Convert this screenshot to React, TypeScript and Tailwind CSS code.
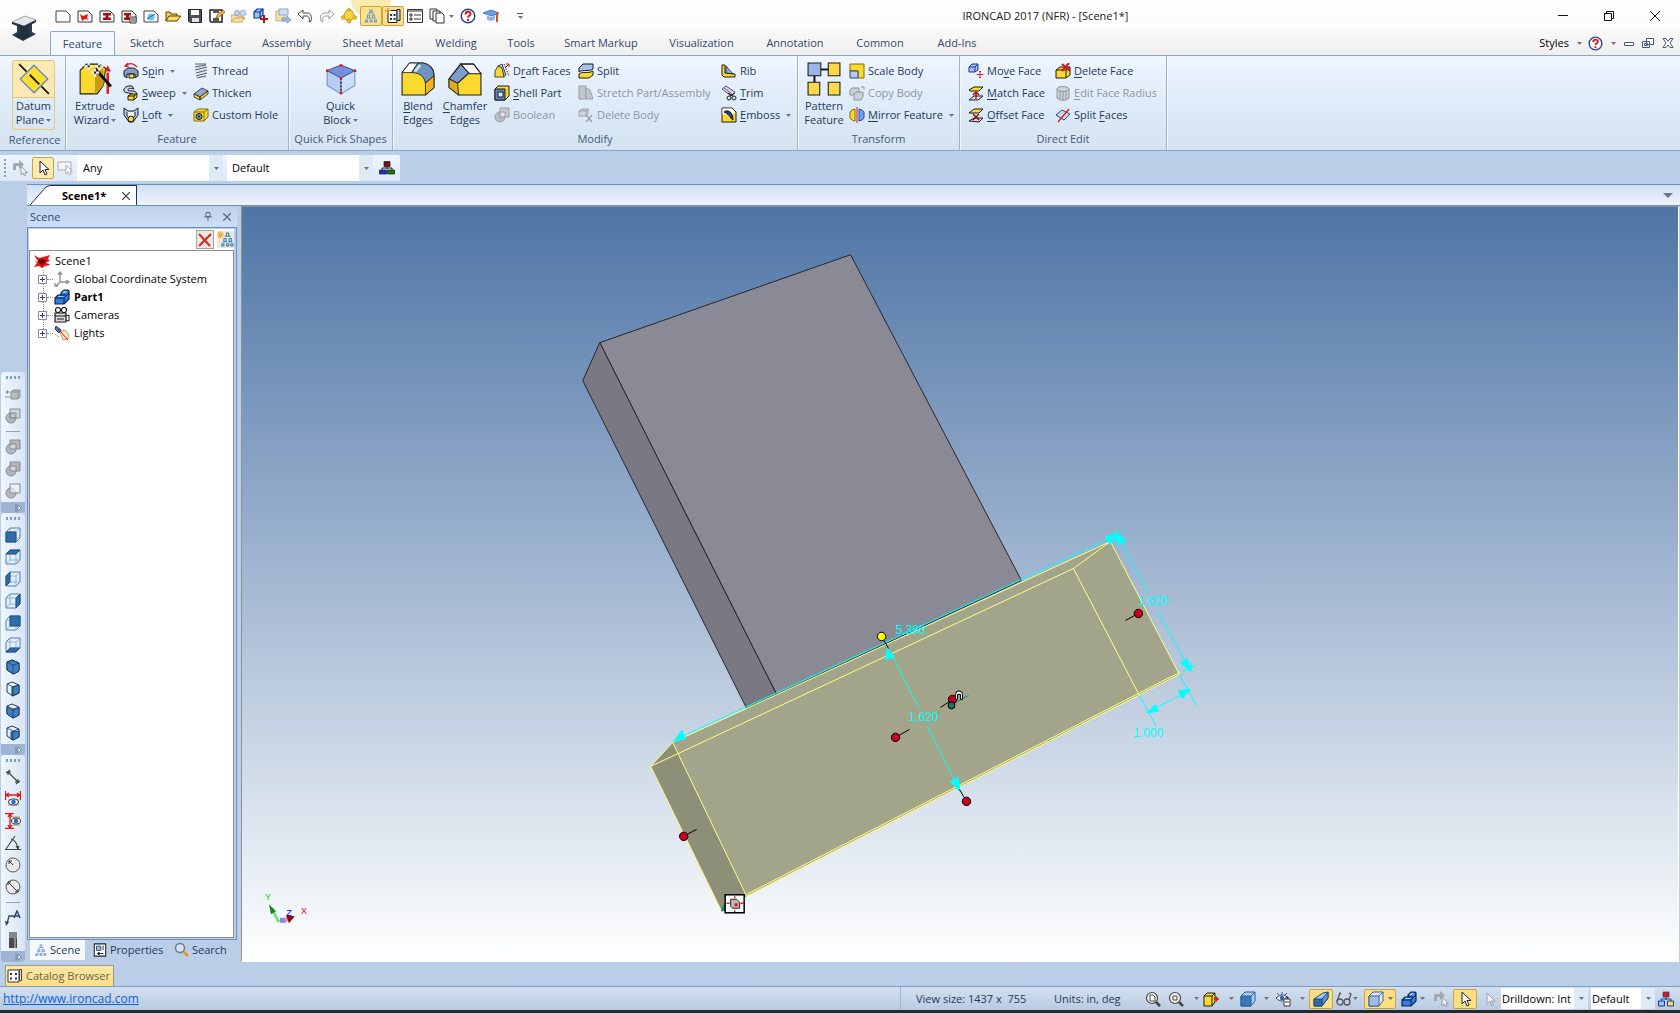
import { useState } from "react";
import type { ReactNode } from "react";

const N = "#1c1c1c"; // outline
const Y = "#fbd92f"; // yellow fill

// all small icons are drawn on a 16x16 grid
const icons: Record<string, ReactNode> = {
  page: <path d="M1 3h10l4 4v7H1z" fill="#fbfbfb" stroke="#444" />,
  pageRed: (
    <>
      <path d="M1 3h10l4 4v7H1z" fill="#fff" stroke="#333" />
      <path d="M3 6l3 2 5-2-1 4 2 2-4-1-3 2z" fill="#e11" />
    </>
  ),
  pageBeam: (
    <>
      <path d="M1 3h10l4 4v7H1z" fill="#fff" stroke="#333" />
      <path d="M4 5h8v2.500h-2.500v2H12V12H4V9.500h2.500v-2H4z" fill="#a80f14" />
    </>
  ),
  pageBeam2: (
    <>
      <path d="M1 3h10l4 4v7H1z" fill="#fff" stroke="#333" />
      <path d="M3 5h7v2.500H8v2h2V12H3V9.500h2v-2H3z" fill="#a80f14" />
      <path d="M9 9h6v6H9z" fill="#fff" stroke="#333" />
      <path d="M10 11h4M10 13h4" stroke="#333" />
    </>
  ),
  pageBlue: (
    <>
      <path d="M1 3h10l4 4v7H1z" fill="#fff" stroke="#444" />
      <circle cx="8" cy="9" r="3.500" fill="#6cc5e8" />
      <path d="M4 11l8-5" stroke="#17689c" />
    </>
  ),
  open: (
    <>
      <path d="M1 13V4h4l1 2h6v2" fill="#f5cf5d" stroke="#5a4300" />
      <path d="M1 13l3-5h12l-4 5z" fill="#fbdc6f" stroke="#5a4300" />
    </>
  ),
  save: (
    <>
      <path d="M1.500 1.500h13v13H3l-1.500-1.500z" fill="#4b525c" stroke="#222" />
      <path d="M4 2h8v5H4z" fill="#fff" />
      <path d="M5 10h7v4H5z" fill="#e6e6e6" />
    </>
  ),
  saveAs: (
    <>
      <path d="M1 2h12v12H2l-1-1z" fill="#fff" stroke="#222" strokeWidth="1.500" />
      <path d="M4 2h6v3H4zM4 10h6v4H4z" fill="#555" />
      <path d="M7 10l1-3 6-5 2 2-6 5z" fill="#f4b13c" stroke="#7a4a00" strokeWidth=".6" />
    </>
  ),
  folderGear: (
    <>
      <path d="M0 14V7h5l1 1h6v3M0 14l3-4h11l-3 4z" fill="#f9dfa0" stroke="#c9a55c" />
      <circle cx="6" cy="5" r="2.500" fill="#c9d6ef" stroke="#8da2cc" />
      <circle cx="12" cy="5" r="3" fill="#c9d6ef" stroke="#8da2cc" strokeDasharray="2 1" />
    </>
  ),
  cubePlus: (
    <>
      <path d="M1 4l3-3h6v6l-3 3H1z" fill="#9ec0f2" stroke="#123a8c" strokeWidth="1.200" />
      <path d="M1 4h6v6M7 4l3-3" fill="none" stroke="#123a8c" strokeWidth="1.200" />
      <path d="M11 7v8M7 11h8" stroke="#b4131a" strokeWidth="2" />
    </>
  ),
  boxExport: (
    <>
      <path d="M1 3h9v10H1z" fill="#f3e3a8" stroke="#b9b08c" />
      <path d="M4 1h9v6H4z" fill="#cfdcf3" stroke="#8fa6cf" />
      <path d="M7 10h5V8l4 4-4 3v-2H7z" fill="#9fb7dd" stroke="#6e8cc0" strokeWidth=".7" />
    </>
  ),
  undo: <path d="M1 6l5-4v3h4c4 0 5 3 4 8l-2 1c1-4 0-6-3-6H6v3z" fill="#fff" stroke="#444" />,
  redo: <path d="M15 6l-5-4v3H6C2 5 1 8 2 13l2 1C3 10 4 8 7 8h3v3z" fill="#fff" stroke="#999" />,
  bell: (
    <>
      <path d="M8 1l3 2 2 4 1 3-6 3-6-3 1-3 2-4z" fill="#fbd540" stroke="#a88300" strokeWidth=".8" />
      <circle cx="8" cy="13" r="2" fill="#f6c318" stroke="#a88300" strokeWidth=".7" />
      <circle cx="2" cy="9.500" r="1.700" fill="#f6c318" stroke="#a88300" strokeWidth=".6" />
      <circle cx="14" cy="9.500" r="1.700" fill="#f6c318" stroke="#a88300" strokeWidth=".6" />
      <circle cx="8" cy="1.500" r="1.200" fill="#f6c318" stroke="#a88300" strokeWidth=".6" />
    </>
  ),
  people: (
    <g fill="none" stroke="#6d9acb" strokeWidth="1.100">
      <path d="M7 4V2h2v2l1 1H6zM4.500 9V7h2v2l.5 1H4zM9.500 9V7h2v2l.5 1H9zM2.500 14v-2h2v2H1.500zM7 14v-2h2v2H6.500zM11.500 14v-2h2v2h-2.500z" />
    </g>
  ),
  peopleStar: (
    <>
      <g fill="none" stroke="#3f83b8" strokeWidth="1">
        <path d="M9 4V2h2v2l1 1H8zM6.500 9V7h2v2l.5 1H6zM11.500 9V7h2v2l.5 1h-3zM4.500 14v-2h2v2H4zM9 14v-2h2v2H8.500zM13 14v-2h2v2z" />
      </g>
      <path d="M3 0v7M0 3.500h6.500M1 1l4.500 5M5.500 1L1 6" stroke="#f0a52c" />
    </>
  ),
  catalogStar: (
    <>
      <path d="M3 2.500h9v12H3z" fill="#f6f6f6" stroke="#222" />
      <path d="M12 1.500h3v11h-3z" fill="#ccc" stroke="#222" />
      <path d="M5 6h2v2H5zM8.500 6h2v2h-2zM5 10h2v2H5zM8.500 10h2v2h-2z" fill="#333" />
      <path d="M3 0v5M0 2.500h6" stroke="#e38d18" strokeWidth="1.200" />
    </>
  ),
  catalog: (
    <>
      <path d="M1 2h11v12H1z" fill="#fff" stroke="#333" />
      <path d="M12.500 1.500h2v11h-2z" fill="#ddd" stroke="#444" />
      <path d="M3 5h2v2H3zM8 5h2v2H8zM3 9.500h2v2H3zM8 9.500h2v2H8z" fill="#333" />
    </>
  ),
  list: (
    <>
      <path d="M.5 1.500h15v13H.5z" fill="#fff" stroke="#333" />
      <path d="M0 3h16M7 7h7M7 11h7" stroke="#333" />
      <path d="M3 6h2v2H3zM3 10h2v2H3z" fill="#fff" stroke="#333" />
    </>
  ),
  copies: (
    <g fill="#fff" stroke="#333">
      <path d="M1 1h7v10H1z" />
      <path d="M4 3h7v10H4z" />
      <path d="M7 5h6l2 2v8H7z" />
    </g>
  ),
  help: (
    <>
      <circle cx="8" cy="8" r="6.800" fill="#fff" stroke="#2a4a86" strokeWidth="1.500" />
      <path d="M5.500 6.500C5.500 3 10.500 3 10.500 6c0 1.700-2.500 1.800-2.500 3.500M8 11v2" fill="none" stroke="#e01414" strokeWidth="2" />
    </>
  ),
  grad: (
    <>
      <path d="M0 5l8-3 8 3-7 3z" fill="#6d9de0" stroke="#4a7bc2" />
      <path d="M4 8v4l5 1 3-2V7L9 9z" fill="#8db4ec" />
      <path d="M14 5v9" stroke="#e24b1a" strokeWidth="2" />
    </>
  ),
  datum: (
    <>
      <path d="M8 1.500L14.500 8 8 14.500 1.500 8z" fill="#fbdf2a" stroke="#5d86cf" strokeWidth=".6" />
      <path d="M1 1l3.500 3.500M6 6l4.500 4.500M11.500 11.500L15 15" stroke={N} strokeWidth=".9" />
    </>
  ),
  extrude: (
    <>
      <path d="M1 4l3-3h6l3 2-1 8-3 4H1z" fill={Y} stroke={N} strokeWidth=".5" />
      <path d="M8 5l4-2v8l-4 4z" fill="#c99a12" />
      <path d="M14 5v10" stroke="#e01f1f" strokeWidth="1.200" />
      <path d="M14 1.500l1.500 3h-3z" fill="#e01f1f" />
      <path d="M8 3l7.500 8.500" stroke="#111" strokeWidth="1.400" />
      <path d="M5 0v4M3 2h4M10 0v4M8 2h4M8 3v4M6 5h4" stroke="#eee" strokeWidth="1" />
      <path d="M4.500 1.500h1v1h-1zM9.500 1.500h1v1h-1zM7.500 4.500h1v1h-1z" fill="#333" />
    </>
  ),
  spin: (
    <>
      <path d="M1 8l4-3h6l4 3v5l-3 2v-4H4v4l-3-2z" fill="#7f9fca" stroke={N} />
      <path d="M6 11h5v4H6z" fill={Y} stroke={N} />
      <path d="M3 3c3-3 7-3 11 1M5 0L2 3l4 1" fill="none" stroke="#e01414" strokeWidth="1.200" />
    </>
  ),
  sweep: (
    <>
      <path d="M9 1C4 0 0 3 1 6s8 1 9 4l4-1C13 4 5 7 5 5s3-2 6-1z" fill="#c3d3ea" stroke={N} />
      <path d="M5 11l3-2h6v3l-3 3H5z" fill={Y} stroke={N} />
      <path d="M5 11h6v4M11 11l3-2" fill="none" stroke={N} />
    </>
  ),
  loft: (
    <>
      <path d="M1 1l4 3h6l4-3v7l-5 7H6L1 8z" fill="#b8cbe9" stroke={N} />
      <path d="M4 5v4c0 2 8 2 8 0V5" fill="#eaf2fc" stroke={N} />
      <ellipse cx="8" cy="12" rx="3" ry="2.800" fill={Y} stroke={N} />
    </>
  ),
  thread: (
    <>
      <path d="M3 1h10v14H5z" fill="#dfe6f0" />
      <path d="M2 1h11M2 4l11-2M2 7l12-3M3 10l11-3M3 13l11-3M4 15l9-2" stroke="#5b6472" strokeWidth="1.200" />
    </>
  ),
  thicken: (
    <>
      <path d="M1 9l8-6 6 3-8 6z" fill="#8facd6" stroke={N} strokeWidth=".8" />
      <path d="M1 9l6 3v3L1 12zM7 12l8-6v3l-8 6z" fill={Y} stroke={N} strokeWidth=".8" />
    </>
  ),
  hole: (
    <>
      <path d="M1 5l4-3h10v8l-4 4H1z" fill={Y} stroke="#8a6a00" />
      <path d="M1 5h10v9M11 5l4-3" fill="none" stroke="#8a6a00" />
      <circle cx="6" cy="9.500" r="3" fill="#6f94c9" stroke={N} />
      <circle cx="6" cy="9.500" r="1" fill={N} />
    </>
  ),
  quick: (
    <>
      <path d="M1.500 4L8 7.500V15L1.500 11z" fill="#b7cdf4" stroke="#6b8fd0" strokeWidth=".5" />
      <path d="M14.500 4L8 7.500V15l6.500-4z" fill="#cfdffa" stroke="#6b8fd0" strokeWidth=".5" />
      <path d="M1.500 4L8 1.500 14.500 4 8 7.500z" fill="#7590d8" stroke="#4a62a8" strokeWidth=".5" />
      <path d="M8 7.500V15" stroke={N} strokeWidth=".6" strokeDasharray="1 .7" />
      <path d="M1 3.500h1.200v1.200H1zM7.400 1h1.200v1.200H7.400zM14 3.500h1.200v1.200H14zM7.400 7h1.200v1.200H7.400zM7.400 14h1.200v1.200H7.400z" fill="#f01212" />
    </>
  ),
  blend: (
    <>
      <path d="M.5 5L4 .5h6.500c3 .5 5 3 5 5V12L11.500 15.500H.5z" fill={Y} stroke={N} strokeWidth=".5" />
      <path d="M.5 5L4 .5h4L5 5z" fill="#fff" stroke={N} strokeWidth=".4" />
      <path d="M5 5L8 .5h2.500c3 .5 5 3 5 6L11.500 10C11 7 9 5 5 5z" fill="#6f93bf" stroke={N} strokeWidth=".4" />
      <path d="M6.500 4.500L9 1.500" stroke="#d5e3f3" strokeWidth="1.200" />
      <path d="M11.500 10l4-3.500V12l-4 3.500z" fill="#f5b41b" stroke={N} strokeWidth=".4" />
    </>
  ),
  chamfer: (
    <>
      <path d="M.5 8l5.500-7h6l3.500 4.500v10H5L.5 12z" fill={Y} stroke={N} strokeWidth=".5" />
      <path d="M.5 8L6 1l4 4-5.500 5z" fill="#7d9ecb" stroke={N} strokeWidth=".5" />
      <path d="M6 1h6l3.500 4.500H10z" fill="#fff" stroke={N} strokeWidth=".5" />
      <path d="M.5 8L4.500 10 5 15.500.5 12z" fill="#e0ab18" stroke={N} strokeWidth=".4" />
    </>
  ),
  draft: (
    <>
      <path d="M4 3l4-2 4 11-3 2z" fill="#a9c3ea" stroke={N} strokeWidth=".8" />
      <path d="M1 14V8l3-5 4 2 2 9z" fill={Y} stroke={N} strokeWidth=".8" />
      <path d="M10 1l5 12" stroke="#333" strokeDasharray="1.500 1" />
      <path d="M12 1h3v3M11 5l4-4" fill="none" stroke="#d11" />
    </>
  ),
  shell: (
    <>
      <path d="M1 4l3-3h11v10l-4 4H1z" fill={Y} stroke={N} />
      <path d="M1 4h10v11H1z" fill="#5d86bf" stroke={N} />
      <path d="M4 7h5v5H4z" fill="#dce9fb" stroke={N} />
    </>
  ),
  boolean: (
    <>
      <circle cx="6" cy="10" r="5" fill="#b9bdc4" stroke="#999da4" />
      <path d="M6 1h9v9H6z" fill="#c6cad0" stroke="#999da4" />
      <path d="M6 5h5v5H6z" fill="#dfe3e8" stroke="#999da4" />
    </>
  ),
  split: (
    <>
      <path d="M1 5l4-4h10v5c-4 3-10 0-14 3z" fill="#a9c4ec" stroke={N} />
      <path d="M1 11c4-3 9 0 14-3v4l-4 3H1z" fill={Y} stroke={N} />
    </>
  ),
  stretch: (
    <g fill="#c2c7cf" stroke="#9a9fa8">
      <path d="M1 1h7v13H1z" />
      <path d="M8 3l4 2 3 9H8z" />
    </g>
  ),
  deleteBody: (
    <>
      <path d="M1 4l3-2h6v5l-2 2H1zM1 4h7v5M8 4l2-2" fill="#d4d8de" stroke="#9a9fa8" />
      <path d="M8 8l6 7M14 8l-6 7" stroke="#9a9fa8" strokeWidth="1.500" />
    </>
  ),
  rib: (
    <>
      <path d="M1 2h3v8l10 1v3H3l-2-2z" fill={Y} stroke={N} />
      <path d="M5 3l7 8-7-1z" fill="#8fb0dd" stroke={N} strokeWidth=".8" />
    </>
  ),
  trim: (
    <>
      <path d="M1 4l4-3 9 6-4 4z" fill="#c4d4f2" stroke="#4561a8" />
      <path d="M3 3l8 6" stroke="#e04848" />
      <circle cx="8" cy="13" r="2" fill="none" stroke={N} />
      <circle cx="13" cy="13" r="2" fill="none" stroke={N} />
      <path d="M9 11l5-3M12 11L7 8" stroke={N} />
    </>
  ),
  emboss: (
    <>
      <path d="M1 1h10l4 4v10H1z" fill={Y} stroke={N} />
      <path d="M1.500 1.500h9l4 4-3 2h-10z" fill="#fff" />
      <path d="M3 5c4-3 9 0 9 8-3-1-2-5-9-8z" fill="#1f3f7a" stroke={N} />
    </>
  ),
  pattern: (
    <>
      <path d="M3.500 3.500h9M3.500 3.500v8" stroke={N} />
      <path d="M.5.5h6v6h-6z" fill="#9bb4ea" stroke={N} strokeWidth=".5" />
      <path d="M10 .5h5.500v6H10zM.5 9.500H6v6H.5zM10 9.500h5.500v6H10z" fill="#fcd94a" stroke={N} strokeWidth=".5" />
    </>
  ),
  scale: (
    <>
      <path d="M1 1h14v14H9V8H1z" fill={Y} stroke="#8a6a00" />
      <path d="M1 8h8v7H1z" fill="#b6c9f3" stroke="#33427a" />
    </>
  ),
  copyBody: (
    <g fill="#ccd1d8" stroke="#8f959e">
      <path d="M1 5l2-2h7v5l-2 2H1z" />
      <path d="M5 9l2-2h7v5l-2 3H5z" />
      <path d="M12 2h3v3" fill="none" />
    </g>
  ),
  mirror: (
    <>
      <path d="M1 5l2-2 3-1v12l-3-1-2-2z" fill={Y} stroke="#8a6a00" />
      <path d="M15 5l-2-2-3-1v12l3-1 2-2z" fill="#6fa0ea" stroke="#2d4f96" />
      <path d="M8 0v16" stroke="#e01414" />
    </>
  ),
  moveFace: (
    <>
      <path d="M1 4l3-3h6v6L7 9H1z" fill="#a5c2f3" stroke="#123a8c" />
      <path d="M1 4h6v5M7 4l3-3" fill="none" stroke="#123a8c" />
      <path d="M12 8v7M8.500 11.500h7M11 9l1-1 1 1M11 14l1 1 1-1" fill="none" stroke="#c8323a" />
    </>
  ),
  matchFace: (
    <>
      <path d="M1 5l5-3h9l-4 4H2z" fill={Y} stroke={N} />
      <path d="M1 15l5-4h9l-5 4z" fill="#e8e8e8" stroke={N} />
      <path d="M8 14V8M5 10l3-3 3 3" fill="none" stroke="#b4131a" strokeWidth="1.500" />
    </>
  ),
  offsetFace: (
    <>
      <path d="M1 6l5-4h9l-4 4z" fill={Y} stroke={N} />
      <path d="M1 14l5-3h9l-4 4z" fill="#ddd" stroke={N} />
      <path d="M5 7l6 6M11 7l-6 6" stroke="#8d1016" strokeWidth="1.500" />
    </>
  ),
  deleteFace: (
    <>
      <path d="M1 7l4-3h10v8l-4 3H1z" fill={Y} stroke={N} />
      <path d="M1 7h10v8M11 7l4-3" fill="none" stroke={N} />
      <path d="M7 1l8 7M14 0L7 8" stroke="#d1161c" strokeWidth="2" />
    </>
  ),
  editRadius: (
    <g fill="#cdd2d9" stroke="#8f959e">
      <path d="M2 4v9c2 3 10 3 12 0V4" />
      <ellipse cx="8" cy="4" rx="6" ry="2.500" />
      <path d="M5 6v8M8 7v8M11 6v8" fill="none" />
    </g>
  ),
  splitFaces: (
    <>
      <path d="M1 8l6-5 8 4-6 6z" fill="#c9d7f1" stroke="#33427a" />
      <path d="M3 15L14 2" stroke="#e01414" strokeWidth="1.300" />
    </>
  ),
  cursorBack: (
    <>
      <path d="M1 10V4l2-1h4V0l5 4.500L7 9V6H4v4z" fill="#a3a7ad" />
      <path d="M9 6v9l2-2 1.500 3 1.500-1-1-2.500h2.500z" fill="#e9edf2" stroke="#8b9097" strokeWidth=".8" />
    </>
  ),
  cursor: <path d="M5 1v12l3-3 2 5 2-1-2-4.500h4z" fill="#fff" stroke="#222" />,
  cursorBox: (
    <>
      <path d="M1 2h13v8H1z" fill="#f1f4f9" stroke="#a6abb3" />
      <path d="M9 5v9l2-2 1.500 3 1.500-1-1-2.500h2.500z" fill="#fff" stroke="#999da4" strokeWidth=".8" />
    </>
  ),
  cursorGray: <path d="M6 2v11l3-3 2 5 1.500-1-2-4h3.500z" fill="#f4f6fa" stroke="#9b9fa5" />,
  orgTree: (
    <>
      <path d="M8 5v4M3 11V8h10v3" fill="none" stroke={N} />
      <path d="M5 1.500h6v5H5z" fill="#7d0d12" stroke={N} strokeWidth=".7" />
      <path d="M.5 10h7v4h-7z" fill="#1b2fd0" stroke={N} strokeWidth=".7" />
      <path d="M8.500 10h7v4h-7z" fill="#0d7a1c" stroke={N} strokeWidth=".7" />
    </>
  ),
  orgTree2: (
    <>
      <path d="M8 5v4M3 11V8h10v3" fill="none" stroke="#1c3f9c" />
      <path d="M5 1h6v5H5z" fill="#e01414" stroke="#1c3f9c" strokeWidth=".7" />
      <path d="M.5 10h6v5h-6z" fill="#9cc4f2" stroke="#1c3f9c" />
      <path d="M9.500 10h6v5h-6z" fill="#f6e04a" stroke="#1c3f9c" />
    </>
  ),
  scene: (
    <>
      <path d="M0 2l5 3 4-1 7-2-2 4 2 2-3 1 3 3-5 1-3 2-3-2-5 1 3-4-2-2 2-1z" fill="#e5141a" />
      <path d="M4 7l4-1 4 1-1 3-3 2-3-2z" fill="#6d070b" />
      <path d="M0 6l4 1-1 2zM16 9l-4 0 2 2z" fill="#fff" />
    </>
  ),
  axes: <path d="M6 2v9h8M6 11l-4 4M4 4l2-3 2 3M12 9l3 2-3 2M1 12v3h3" fill="none" stroke="#8a9098" strokeWidth="1.300" />,
  part: (
    <>
      <path d="M1 9l3-3h3V4l3-3h4l1 1v8l-5 5H1z" fill="#2f7fe0" stroke="#0c1f4a" strokeWidth="1.200" />
      <path d="M1 9h9v6M10 9l5-5M7 6h5" fill="none" stroke="#0c1f4a" />
      <path d="M3 8l2-1h5l-1 1zM8 4l2-2h3l-2 2z" fill="#a7d1fb" />
    </>
  ),
  camera: (
    <>
      <circle cx="4" cy="3" r="2.500" fill="#fff" stroke={N} strokeWidth="1.200" />
      <circle cx="10" cy="3" r="2.500" fill="#fff" stroke={N} strokeWidth="1.200" />
      <path d="M1 6h11v9H1z" fill="#d8d8de" stroke={N} strokeWidth="1.200" />
      <path d="M1 9h11M3 12h7M12 9l3-1v6l-3-1" fill="none" stroke={N} />
    </>
  ),
  light: (
    <>
      <path d="M2 1l5 4-2 3-4-4z" fill="#4b79c4" stroke="#1f3a70" />
      <path d="M6 7l5-2 4 5-1 4-5 1z" fill="#f2e6c0" stroke="#b7a671" />
      <path d="M4 4l10 11" stroke="#d11" />
      <path d="M1 9l4 3" stroke="#777" strokeDasharray="1 1" />
    </>
  ),
  props: (
    <>
      <path d="M1.500 1h13v14h-13z" fill="#fff" stroke="#222" strokeWidth="1.200" />
      <path d="M4 3.500h5v5H4z" fill="#9fb8dd" stroke="#2c4e86" />
      <path d="M11.500 3v5M5 12h7M5 12l2-1.500v3z" stroke="#222" />
    </>
  ),
  search: (
    <>
      <circle cx="6" cy="6" r="4.500" fill="#cfe4f8" stroke="#777" strokeWidth="1.500" />
      <path d="M10 10l4 4" stroke="#e19a1e" strokeWidth="3" />
    </>
  ),
  magPage: (
    <>
      <circle cx="7" cy="7" r="5.500" fill="#f4f4f4" stroke="#444" strokeWidth="1.200" />
      <path d="M5 4h3l2 2v4H5z" fill="#fff" stroke="#444" />
      <path d="M11 11l4 4" stroke="#444" strokeWidth="2.500" />
    </>
  ),
  magBox: (
    <>
      <circle cx="7" cy="7" r="5.500" fill="#f4f4f4" stroke="#444" strokeWidth="1.200" />
      <path d="M5 5h4v4H5z" fill="none" stroke="#444" />
      <path d="M11 11l4 4" stroke="#444" strokeWidth="2.500" />
    </>
  ),
  cubeYellow: (
    <>
      <path d="M1 5l3-3h8v9l-3 4H1z" fill={Y} stroke={N} />
      <path d="M1 5h8v10M9 5l3-3" fill="none" stroke={N} />
      <path d="M11 8h5M13.500 5.500v5" stroke="#e01414" strokeWidth="1.500" />
    </>
  ),
  cubeBlue: (
    <>
      <path d="M1 5l4-4h10v9l-4 5H1z" fill="#a9cdf0" stroke="#2d5f9a" />
      <path d="M1 5h10v10H1z" fill="#3b78b8" stroke="#2d5f9a" />
      <path d="M11 5l4-4" stroke="#2d5f9a" />
    </>
  ),
  eyeLock: (
    <>
      <path d="M0 7c4-4 9-4 12 0-3 4-8 4-12 0z" fill="#fff" stroke="#444" />
      <circle cx="6" cy="7" r="2.200" fill="#2469b8" />
      <path d="M6 1v3M1 2l2 2M11 2L9 4" stroke="#2469b8" />
      <path d="M8 8h6v7H8z" fill="#fff" stroke="#333" />
      <path d="M10 8V6h2v2M9 11h4" fill="none" stroke="#333" />
    </>
  ),
  persp: (
    <>
      <path d="M1 8L10 2l5-1v6l-6 8H1z" fill="#a9cdf0" stroke="#214a7c" />
      <path d="M9 8l6-7v6l-6 8z" fill="#5f95cc" stroke="#214a7c" />
      <path d="M1 8h8v7H1z" fill="#2f6aa8" stroke="#214a7c" />
    </>
  ),
  glasses: (
    <g fill="none" stroke="#555" strokeWidth="1.300">
      <circle cx="4" cy="11" r="3" />
      <circle cx="11" cy="11" r="3" />
      <path d="M1 10L4 2l1 1M13 9l2-6-2-1" />
    </g>
  ),
  cubeShade: (
    <>
      <path d="M1 5l4-4h10v9l-4 5H1z" fill="#dbe9fa" stroke="#3f5f94" />
      <path d="M1 5h10v10H1z" fill="#9dbdec" stroke="#3f5f94" />
      <path d="M11 5l4-4" stroke="#3f5f94" />
    </>
  ),
  extents: (
    <g fill="#b9bdc4" stroke="#8a8f98">
      <path d="M6 6l2-2h7v7l-2 2H6z" />
      <path d="M6 6h7v7M13 6l2-2" fill="none" />
      <path d="M0 6h5M2.500 4v4M0 11h5" />
    </g>
  ),
  boolA: (
    <g stroke="#868c96">
      <circle cx="6" cy="10" r="5" fill="#b3b8c0" />
      <path d="M5 1h10v9H5z" fill="#c6cad0" fillOpacity=".6" />
      <path d="M5 5h6v5H5z" fill="none" />
    </g>
  ),
  boolB: (
    <g stroke="#868c96">
      <path d="M5 1h10v9H5z" fill="#b3b8c0" />
      <circle cx="6" cy="10" r="5" fill="#b3b8c0" />
      <path d="M5 5h6v5H5z" fill="#d3d7dc" />
    </g>
  ),
  boolC: (
    <g stroke="#868c96">
      <circle cx="6" cy="10" r="5" fill="#b3b8c0" />
      <path d="M5 1h10v9H5z" fill="#eef2f8" fillOpacity=".7" />
    </g>
  ),
  dimLine: <path d="M1 4l4-3M11 15l4-3M3 3l10 10M3 6V3h3M10 13h3v-3" fill="none" stroke="#444" strokeWidth="1.100" />,
  dimH: (
    <>
      <path d="M3 8h11v7H3z" fill="#c9bda4" />
      <ellipse cx="8.500" cy="11" rx="5" ry="3" fill="#fff" stroke="#333" />
      <circle cx="8.500" cy="11" r="2.300" fill="#1f6fd0" />
      <path d="M.5 0v9M15.500 0v9M1 4h14M4 2L1 4l3 2M12 2l3 2-3 2" fill="none" stroke="#e01414" strokeWidth="1.300" />
    </>
  ),
  dimV: (
    <>
      <path d="M8 3h7v10H8z" fill="#c9bda4" />
      <ellipse cx="11" cy="8" rx="4.500" ry="3" fill="#fff" stroke="#333" />
      <circle cx="11" cy="8" r="2.300" fill="#1f6fd0" />
      <path d="M0 .5h9M0 15.500h9M5 1v14M3 4l2-3 2 3M3 12l2 3 2-3" fill="none" stroke="#e01414" strokeWidth="1.300" />
    </>
  ),
  angle: <path d="M0 14.500h16M1 14L10 1M6 4c4 1 6 5 7 9M11 11l2 3 1-3" fill="none" stroke="#444" strokeWidth="1.100" />,
  radius: (
    <>
      <circle cx="8" cy="8" r="7" fill="#e9eaec" stroke="#555" />
      <path d="M8 8L4 4M4 7V4h3" fill="none" stroke="#333" />
    </>
  ),
  diameter: (
    <>
      <circle cx="8" cy="8" r="7" fill="#e9eaec" stroke="#555" />
      <path d="M3 3l10 10M3 6V3h3M10 13h3v-3" fill="none" stroke="#333" />
    </>
  ),
  leader: (
    <>
      <path d="M2 14L4 6h5" fill="none" stroke="#27466f" strokeWidth="1.300" />
      <path d="M0 11l4 1-3 4z" fill="#27466f" />
      <path d="M9 8l3-7 3 7M10 6h4" fill="none" stroke="#27466f" strokeWidth="1.500" />
    </>
  ),
  bolt: (
    <>
      <path d="M4 6h8v10H4z" fill="#4a4a4a" />
      <path d="M9 6h2v10H9z" fill="#8b8b8b" />
      <path d="M4 1h8M4 3h8M4 5h8" stroke="#222" />
    </>
  ),
};

// wire cubes of the view toolbar, one face filled
const faces: Record<string, string> = {
  front: "M1 5h10v10H1z",
  top: "M1 5l4-4h10l-4 4z",
  left: "M1 5l4-4v10l-4 4z",
  right: "M11 5l4-4v10l-4 4z",
  back: "M5 1h10v10H5z",
  bottom: "M1 15l4-4h10l-4 4z",
};

const isoFaces: Record<string, string> = {
  iso1: "M2 3l5-2 7 3v8l-5 3-7-4z",
  iso2: "M7 6l7-2v8l-7 3z",
  iso3: "M2 4l6 3 6-2v7l-6 3-6-4z",
  iso4: "M6 7l8-1v6l-6 3-2-1z",
};

function Icon({ name, className = "size-4" }: { name: string; className?: string }) {
  let body = icons[name];
  if (faces[name]) {
    body = (
      <>
        <path d="M1 5l4-4h10v10l-4 4H1z" fill="#e4effb" stroke="#4d7fb5" />
        <path d="M1 5h10v10M11 5l4-4M5 1v10h10M5 11l-4 4" fill="none" stroke="#7fa4cc" strokeWidth=".8" />
        <path d={faces[name]} fill="#2f6cab" stroke="#24527f" />
      </>
    );
  } else if (isoFaces[name]) {
    body = (
      <>
        <path d="M2 3l5-2 7 3v8l-6 3-6-4z" fill="#e4effb" stroke="#1f3f63" />
        <path d={isoFaces[name]} fill="#3f7fc4" stroke="#1f3f63" />
        <path d="M8 15V6L2 3M8 6l6-2" fill="none" stroke="#1f3f63" strokeWidth=".8" />
      </>
    );
  }
  return (
    <svg viewBox="0 0 16 16" className={`shrink-0 ${className}`} aria-hidden="true">
      {body}
    </svg>
  );
}

function Caret({ className = "" }: { className?: string }) {
  return (
    <svg viewBox="0 0 5 3" className={`w-[5px] h-[3px] shrink-0 ${className}`} aria-hidden="true">
      <path d="M0 0h5L2.500 3z" fill="#6b7585" />
    </svg>
  );
}

const tabs = [
  { label: "Feature", width: "w-[65px]" },
  { label: "Sketch", width: "w-16" },
  { label: "Surface", width: "w-[67px]" },
  { label: "Assembly", width: "w-[81px]" },
  { label: "Sheet Metal", width: "w-[92px]" },
  { label: "Welding", width: "w-[74px]" },
  { label: "Tools", width: "w-14" },
  { label: "Smart Markup", width: "w-[104px]" },
  { label: "Visualization", width: "w-[97px]" },
  { label: "Annotation", width: "w-[90px]" },
  { label: "Common", width: "w-20" },
  { label: "Add-Ins", width: "w-[74px]" },
];

const quickAccess = [
  "page", "pageRed", "pageBeam", "pageBeam2", "pageBlue", "open", "save", "saveAs",
  "folderGear", "cubePlus", "boxExport", "undo", "redo", "bell", "people", "catalogStar", "list",
];

// "_" marks the letter that is underlined
function Label({ text }: { text: string }) {
  const i = text.indexOf("_");
  if (i < 0) return <span>{text}</span>;
  return (
    <span>
      {text.slice(0, i)}
      <u className="underline-offset-2">{text[i + 1]}</u>
      {text.slice(i + 2)}
    </span>
  );
}

function Cmd({ icon, text, menu, off }: { icon: string; text: string; menu?: boolean; off?: boolean }) {
  return (
    <button
      disabled={off}
      className={`flex items-center h-[22px] gap-[3px] whitespace-nowrap ${off ? "text-[#8d95a3]" : "text-[#1e395b]"}`}
    >
      <Icon name={icon} />
      <Label text={text} />
      {menu && <Caret className="ml-[3px]" />}
    </button>
  );
}

function BigCmd({ icon, lines, menu, width }: { icon: string; lines: string[]; menu?: boolean; width: string }) {
  return (
    <button className={`flex flex-col items-center justify-start pt-[2px] text-[#1e395b] whitespace-nowrap leading-[14px] ${width}`}>
      <Icon name={icon} className="size-[34px]" />
      <span className="mt-[3px]">
        <Label text={lines[0]} />
      </span>
      <span className="flex items-center gap-[2px]">
        {lines[1]}
        {menu && <Caret />}
      </span>
    </button>
  );
}

function Group({ title, width, children }: { title: string; width: string; children: ReactNode }) {
  return (
    <section className={`flex flex-col shrink-0 border-r border-[#9db2cd] shadow-[1px_0_0_#f5f9fe] ${width}`}>
      <div className="flex flex-1 pt-1">{children}</div>
      <h2 className="h-[21px] text-center text-[#43587a] leading-5 whitespace-nowrap">{title}</h2>
    </section>
  );
}

function Handle() {
  return (
    <div className="flex h-[11px] w-full items-center justify-end bg-[#9db4d5] rounded-b-sm pr-1">
      <svg viewBox="0 0 6 8" className="w-[6px] h-2">
        <path d="M1 0v8M3 1l3 3-3 3z" fill="#fff" stroke="#5a6c88" strokeWidth=".7" />
      </svg>
    </div>
  );
}

function SideBar({ label, items }: { label: string; items: string[] }) {
  return (
    <div>
      <div role="toolbar" aria-label={label} className="flex flex-col items-center rounded-t bg-linear-to-r from-[#f0f6fd] to-[#d8e5f5]">
        <div className="my-1 h-[3px] w-[15px] bg-[repeating-linear-gradient(90deg,#7f9fca_0_2px,transparent_2px_4px)]" />
        {items.map((item, i) =>
          item === "-" ? (
            <hr key={i} className="my-1 w-[14px] border-[#8ea5c4]" />
          ) : (
            <button key={i} aria-label={item} className="flex h-[22px] items-center">
              <Icon name={item} />
            </button>
          )
        )}
      </div>
      <Handle />
    </div>
  );
}

function Drop({ label, options, className }: { label: string; options: string[]; className: string }) {
  return (
    <div className={`flex items-center bg-white ${className}`}>
      <select aria-label={label} className="h-full min-w-0 flex-1 appearance-none bg-transparent text-black outline-none">
        {options.map((o) => (
          <option key={o}>{o}</option>
        ))}
      </select>
      <span className="flex h-full w-[14px] items-center justify-center bg-[#dfeaf7]">
        <Caret />
      </span>
    </div>
  );
}

const tree = [
  { icon: "axes", label: "Global Coordinate System" },
  { icon: "part", label: "Part1", bold: true },
  { icon: "camera", label: "Cameras" },
  { icon: "light", label: "Lights" },
];

function Pin({ x, y, dx, dy, color = "#c8001e" }: { x: number; y: number; dx: number; dy: number; color?: string }) {
  return (
    <g stroke="#000">
      <path d={`M${x} ${y}l${dx} ${dy}`} />
      <circle cx={x} cy={y} r="4.200" fill={color} />
    </g>
  );
}

function Model() {
  return (
    <svg viewBox="242 208 1437 755" preserveAspectRatio="xMidYMid slice" className="absolute inset-0 size-full">
      <g stroke="#26262c" strokeWidth="1" strokeLinejoin="round">
        <path d="M600 344L851 256 1022 582 777 696z" fill="#8a8a97" />
        <path d="M600 344L583 382 747 710 777 696z" fill="#7a7983" />
      </g>

      <path d="M651 768L673 744 1111 543 1180 676 747 898 722 913z" fill="#a3a58b" />
      <path d="M651 768L673 744 747 898 722 913z" fill="#8e8f79" />
      <g fill="none" stroke="#ffff82" strokeWidth="1">
        <path d="M651 768L673 744 1111 543 1180 676 747 898M673 744L747 898M651 768L722 913" />
        <path d="M651 768L1074 570 1111 543M1074 570L1140 697" />
        <path d="M747 896L1180 674" />
      </g>
      <path d="M721 913l5-11v11z" fill="#108a82" />

      <g stroke="#00ffff" strokeWidth="1" fill="#00ffff">
        <path d="M674 742L1117 537" fill="none" />
        <path d="M674 743l8-11 4 8zM1119 535l-13 3 5 8z" />
        <path d="M1117 535L1149 594M1158 612L1190 671" fill="none" />
        <path d="M1116 534l3 13 8-5zM1191 673l-10-9 7-4z" />
        <path d="M1111 543l15-12M1117 531v8M1183 673l14-6M1180 676l17 31M1140 697l17 31M1192 664v9" fill="none" />
        <path d="M1147 714L1191 692" fill="none" />
        <path d="M1148 714l8-8 3 7zM1191 691l-12 1 4 8z" />
        <path d="M889 650L919 709M928 728L959 790" fill="none" />
        <path d="M888 650l-2 11 9-3zM960 793l-9-10 8-4z" />
      </g>
      <g fill="#00ffff" fontSize="12" textAnchor="middle" fontFamily="Liberation Sans, Arial, sans-serif">
        <text x="911" y="636">5.380</text>
        <text x="924" y="723">1.620</text>
        <text x="1154" y="607">1.620</text>
        <text x="1149" y="739">1.000</text>
      </g>

      <Pin x={882} y={638} dx={7} dy={12} color="#ffff00" />
      <Pin x={1139} y={615} dx={-13} dy={7} />
      <Pin x={896} y={739} dx={14} dy={-8} />
      <Pin x={967} y={803} dx={-7} dy={-12} />
      <Pin x={684} y={838} dx={13} dy={-7} />
      <path d="M955 705L969 697" stroke="#108a82" />
      <Pin x={953} y={701} dx={-12} dy={8} />
      <circle cx="952" cy="707" r="3.500" fill="#10736c" stroke="#000" />
      <path d="M956 701v-5a3.500 3.500 0 017 0v5h-2v-5h-3v5z" fill="#fff" stroke="#000" />

      <rect x="725.500" y="896.500" width="19" height="18" fill="#fff" stroke="#000" strokeWidth="1.500" />
      <path d="M731 901h6l3 3v6h-7l-2-2z" fill="#bbb" stroke="#222" />
      <path d="M735 898v2M735 912v2M727 905h3M741 905h3" stroke="#e01414" strokeWidth="1.500" />
      <rect x="735" y="905" width="3" height="3" fill="#e01414" />

      <path d="M279 924L272 911" stroke="#7be08a" strokeWidth="3" />
      <path d="M269 906l7 7-5 3z" fill="#0c8a1c" />
      <path d="M280 922h6" stroke="#8484f4" strokeWidth="5" />
      <path d="M285 922l4-2" stroke="#f28b8b" strokeWidth="4" />
      <path d="M286 917l9 1-6 7z" fill="#8d0c12" />
      <g fontSize="9" textAnchor="middle" fontFamily="Liberation Sans, Arial, sans-serif">
        <text x="268" y="902" fill="#00d820">Y</text>
        <text x="289" y="918" fill="#0000e0">Z</text>
        <text x="304" y="916" fill="#e00018">X</text>
      </g>
    </svg>
  );
}

export default function App() {
  const [tab, setTab] = useState("Feature");
  const [query, setQuery] = useState("");

  return (
    <div className="flex min-h-screen flex-col bg-[#bbcee8] font-['Open_Sans','Noto_Sans',sans-serif] text-[11px] leading-4 text-black">
      {/* Title bar + ribbon tabs */}
      <header className="relative flex h-[55px] bg-linear-to-b from-white via-[#fbfbfb] to-[#eeeeef]">
        {/* click highlight */}
        <div className="pointer-events-none absolute top-0 left-[351px] h-4 w-10 rounded-b-full bg-[#f7dc7c] opacity-60" />
        <button aria-label="Application menu" className="flex w-[50px] items-center pl-[11px]">
          <svg viewBox="0 0 26 28" className="w-[26px] h-7">
            <path d="M1 8L14 2l11 4-4 3v9l4 2-13 7-11-6 5-3v-8z" fill="#2f3d4b" />
            <path d="M1 8l13-6 11 4-12 6z" fill="#e3e8ec" stroke="#8a949e" strokeWidth=".6" />
            <path d="M1 8l12 4 12-6v2l-7 4v7l4 2-10 5-8-4 5-3v-6L1 10z" fill="#223140" />
          </svg>
        </button>
        <div className="relative flex flex-1 flex-col justify-between">
          <div className="flex h-8 items-center pl-[2px]">
            {quickAccess.map((item) => (
              <button
                key={item}
                aria-label={item}
                className={`flex h-5 w-[22px] items-center justify-center ${
                  item === "people" || item === "catalogStar" ? "rounded-xs border border-[#c9a43c] bg-[#fbe08b]" : ""
                }`}
              >
                <Icon name={item} />
              </button>
            ))}
            <button aria-label="copies" className="flex w-8 items-center gap-1 pl-[3px]">
              <Icon name="copies" />
              <Caret />
            </button>
            <button aria-label="help" className="flex w-[18px] justify-end">
              <Icon name="help" />
            </button>
            <button aria-label="learn" className="flex w-[30px] justify-center">
              <Icon name="grad" />
            </button>
            <button aria-label="Customize" className="ml-[11px] flex flex-col items-center gap-[2px]">
              <span className="h-px w-[6px] bg-[#555]" />
              <Caret />
            </button>
            <h1 className="flex-1 pl-20 text-center text-[#222]">IRONCAD 2017 (NFR) - [Scene1*]</h1>
            <div className="flex w-[192px] items-center justify-end gap-9 pr-5">
              <button aria-label="Minimize">
                <svg viewBox="0 0 10 10" className="size-[10px]"><path d="M0 4.500h10" stroke="#111" /></svg>
              </button>
              <button aria-label="Restore">
                <svg viewBox="0 0 10 10" className="size-[10px]"><path d="M.5 2.500h7v7h-7zM2.500 2.500v-2h7v7h-2" fill="none" stroke="#111" /></svg>
              </button>
              <button aria-label="Close">
                <svg viewBox="0 0 10 10" className="size-[10px]"><path d="M0 0l10 10M10 0L0 10" stroke="#111" /></svg>
              </button>
            </div>
          </div>
          <div className="flex h-[23px] items-end">
            <nav className="flex">
              {tabs.map((t) => (
                <button
                  key={t.label}
                  onClick={() => setTab(t.label)}
                  className={`h-6 shrink-0 text-[#31486b] whitespace-nowrap ${t.width} ${
                    tab === t.label ? "rounded-t-xs border border-b-0 border-[#8ea9cc] bg-[#f3f8fe]" : ""
                  }`}
                >
                  {t.label}
                </button>
              ))}
            </nav>
            <div className="ml-auto flex h-6 items-center pr-[6px]">
              <button className="flex items-center gap-2">
                Styles <Caret />
              </button>
              <button aria-label="Help" className="ml-[6px] flex items-center gap-2">
                <Icon name="help" className="size-[15px]" />
                <Caret />
              </button>
              <button aria-label="Minimize document" className="ml-2">
                <svg viewBox="0 0 10 10" className="size-[10px]"><path d="M.5 4.500h9v3h-9z" fill="#fff" stroke="#4a5a74" /></svg>
              </button>
              <button aria-label="Restore document" className="ml-2">
                <svg viewBox="0 0 12 12" className="size-3"><path d="M4.500 1.500h7v6h-7zM.5 4.500h7v6h-7zM2.500 6.500h3v2h-3z" fill="#fff" stroke="#4a5a74" /></svg>
              </button>
              <button aria-label="Close document" className="ml-2">
                <svg viewBox="0 0 12 10" className="w-3 h-[10px]"><path d="M1 .5h3l2 3 2-3h3L8 5l3 4.500H8L6 7 4 9.500H1L4 5z" fill="#fff" stroke="#4a5a74" /></svg>
              </button>
            </div>
          </div>
        </div>
      </header>

      {/* Ribbon */}
      <div className="flex h-24 border-y border-[#8ea5c6] bg-linear-to-b from-[#eff6fe] via-[#deebf8] to-[#d5e3f1]">
        <Group title="Reference" width="w-[66px] pl-1">
          <button className="ml-2 flex h-[70px] w-[43px] flex-col items-center justify-start rounded-xs border border-[#e6c87a] text-[#1e395b] leading-[14px]">
            <span className="flex w-full justify-center border-b border-[#e6c87a] bg-[#fbe9b4] py-px">
              <Icon name="datum" className="size-[34px]" />
            </span>
            <span className="mt-px">Datum</span>
            <span className="flex items-center gap-[2px]">
              Plane <Caret />
            </span>
          </button>
        </Group>
        <Group title="Feature" width="w-[223px]">
          <BigCmd icon="extrude" lines={["Extrude", "Wizard"]} menu width="w-[50px] ml-1" />
          <div className="ml-[3px] w-[70px]">
            <Cmd icon="spin" text="S_pin" menu />
            <Cmd icon="sweep" text="_Sweep" menu />
            <Cmd icon="loft" text="_Loft" menu />
          </div>
          <div>
            <Cmd icon="thread" text="Thread" />
            <Cmd icon="thicken" text="Thicken" />
            <Cmd icon="hole" text="Custom Hole" />
          </div>
        </Group>
        <Group title="Quick Pick Shapes" width="w-[104px]">
          <BigCmd icon="quick" lines={["Quick", "Block"]} menu width="w-full" />
        </Group>
        <Group title="Modify" width="w-[405px]">
          <BigCmd icon="blend" lines={["_Blend", "Edges"]} width="w-[44px] ml-[3px]" />
          <BigCmd icon="chamfer" lines={["_Chamfer", "Edges"]} width="w-[50px]" />
          <div className="ml-1 w-[84px]">
            <Cmd icon="draft" text="D_raft Faces" />
            <Cmd icon="shell" text="_Shell Part" />
            <Cmd icon="boolean" text="Boolean" off />
          </div>
          <div className="w-[143px]">
            <Cmd icon="split" text="Split" />
            <Cmd icon="stretch" text="Stretch Part/Assembly" off />
            <Cmd icon="deleteBody" text="Delete Body" off />
          </div>
          <div>
            <Cmd icon="rib" text="Rib" />
            <Cmd icon="trim" text="_Trim" />
            <Cmd icon="emboss" text="_Emboss" menu />
          </div>
        </Group>
        <Group title="Transform" width="w-[162px]">
          <BigCmd icon="pattern" lines={["Pattern", "Feature"]} width="w-[44px] ml-1" />
          <div className="ml-[3px]">
            <Cmd icon="scale" text="Scale Body" />
            <Cmd icon="copyBody" text="Copy Body" off />
            <Cmd icon="mirror" text="_Mirror Feature" menu />
          </div>
        </Group>
        <Group title="Direct Edit" width="w-[207px]">
          <div className="ml-2 w-[87px]">
            <Cmd icon="moveFace" text="Mo_ve Face" />
            <Cmd icon="matchFace" text="_Match Face" />
            <Cmd icon="offsetFace" text="_Offset Face" />
          </div>
          <div>
            <Cmd icon="deleteFace" text="_Delete Face" />
            <Cmd icon="editRadius" text="_Edit Face Radius" off />
            <Cmd icon="splitFaces" text="Split _Faces" />
          </div>
        </Group>
      </div>

      {/* Selection toolbar */}
      <div className="h-[33px] pt-1">
        <div role="toolbar" aria-label="Selection" className="flex h-[26px] w-[400px] items-center rounded-r-xs bg-linear-to-b from-[#eef5fd] to-[#dce8f6] pl-1">
          <div className="h-[18px] w-[2px] bg-[repeating-linear-gradient(180deg,#7f9fca_0_2px,transparent_2px_4px)]" />
          <button aria-label="Select previous" className="ml-[6px]"><Icon name="cursorBack" /></button>
          <button aria-label="Select" className="ml-1 flex h-[22px] w-[22px] items-center justify-center rounded-xs border border-[#c9a43c] bg-[#fcebb0]">
            <Icon name="cursor" />
          </button>
          <button aria-label="Box select" className="ml-[3px] mr-1"><Icon name="cursorBox" /></button>
          <Drop label="Selection filter" options={["Any"]} className="h-[26px] w-[146px] pl-[6px]" />
          <Drop label="Configuration" options={["Default"]} className="ml-1 h-[26px] w-[146px] pl-[5px]" />
          <button aria-label="Structure" className="ml-[6px]"><Icon name="orgTree" /></button>
        </div>
      </div>

      {/* Work area */}
      <main className="flex flex-1">
        <aside className="flex w-[27px] shrink-0 flex-col justify-end pr-[2px] pl-px">
          <SideBar label="Boolean" items={["extents", "boolA", "-", "boolB", "boolB", "boolC"]} />
          <SideBar label="Views" items={["front", "top", "left", "right", "back", "bottom", "iso1", "iso2", "iso3", "iso4"]} />
          <SideBar label="Dimensions" items={["dimLine", "dimH", "dimV", "angle", "radius", "diameter", "-", "leader", "bolt"]} />
        </aside>

        <div className="flex min-w-0 flex-1 flex-col">
          <div className="flex h-[22px] items-end border-y border-[#6f8fb8] bg-linear-to-b from-[#cfe0f3] to-[#edf4fc]">
            <svg viewBox="0 0 20 20" className="ml-[3px] h-5 w-5 shrink-0">
              <path d="M0 20L16 2l4-1.500V20z" fill="#fff" />
              <path d="M0 20L16 2l4-1.500" fill="none" stroke="#1c3454" />
            </svg>
            <div className="flex h-5 w-[87px] items-center border-t border-r border-[#1c3454] bg-white pl-3 font-bold">
              Scene1*
              <button aria-label="Close Scene1" className="ml-auto pr-[6px]">
                <svg viewBox="0 0 8 8" className="size-2"><path d="M0 0l8 8M8 0L0 8" stroke="#555" strokeWidth="1.300" /></svg>
              </button>
            </div>
            <button aria-label="Open documents" className="ml-auto self-center pr-[7px]">
              <svg viewBox="0 0 10 5" className="h-[5px] w-[10px]"><path d="M0 0h10L5 5z" fill="#6b7585" /></svg>
            </button>
          </div>

          <div className="flex flex-1">
            <aside className="flex w-[210px] shrink-0 flex-col">
              <div className="flex h-[21px] items-center bg-linear-to-b from-[#bfd2ec] to-[#cddff7] pl-[3px] text-[#31486b]">
                Scene
                <button aria-label="Pin" className="ml-auto">
                  <svg viewBox="0 0 8 9" className="w-2 h-[9px]"><path d="M2 .5h4v4H2zM0 5h8M4 5v4" fill="none" stroke="#5b6a80" /></svg>
                </button>
                <button aria-label="Close panel" className="mr-[6px] ml-[11px]">
                  <svg viewBox="0 0 8 8" className="size-2"><path d="M0 0l8 8M8 0L0 8" stroke="#5b6a80" strokeWidth="1.300" /></svg>
                </button>
              </div>
              <div className="flex flex-1 flex-col border border-[#6f8fb8] p-px pr-[2px]">
                <div className="flex h-[21px] items-center bg-white">
                  <input
                    aria-label="Search tree"
                    value={query}
                    onChange={(e) => setQuery(e.target.value)}
                    className="h-full min-w-0 flex-1 px-1 outline-none"
                  />
                  <button aria-label="Clear" onClick={() => setQuery("")} className="flex h-[19px] w-[18px] items-center justify-center border border-[#a9a393] bg-[#ece9dd]">
                    <svg viewBox="0 0 14 14" className="size-[14px]"><path d="M1 1l11 12M13 1L1 13" stroke="#d4262c" strokeWidth="2" /></svg>
                  </button>
                  <button aria-label="Filter tree" className="ml-[3px] bg-[#ece9dd]">
                    <Icon name="peopleStar" className="size-[17px]" />
                  </button>
                </div>
                <div className="flex-1 border border-[#8a8f98] bg-white pt-px pl-1">
                  <div className="flex h-[18px] items-center gap-[5px]">
                    <Icon name="scene" />
                    Scene1
                  </div>
                  <ul className="ml-[9px] border-l border-dotted border-[#888] h-[67px]">
                    {tree.map((n) => (
                      <li key={n.label} className="-ml-[6px] flex h-[18px] items-center whitespace-nowrap">
                        <button aria-label={`Expand ${n.label}`}>
                          <svg viewBox="0 0 9 9" className="size-[9px]">
                            <path d="M.5.5h8v8h-8z" fill="#fff" stroke="#8a8a8a" />
                            <path d="M2 4.500h5M4.500 2v5" stroke="#2a3f9c" />
                          </svg>
                        </button>
                        <span className="mr-px w-[6px] border-t border-dotted border-[#888]" />
                        <Icon name={n.icon} />
                        <span className={`ml-1 ${n.bold ? "font-bold" : ""}`}>{n.label}</span>
                      </li>
                    ))}
                  </ul>
                </div>
              </div>
              <div className="flex h-[22px] items-start pl-[3px] text-[#1e395b]">
                <button className="flex h-5 w-[55px] items-center gap-[2px] bg-[#f5f9fe] pl-1">
                  <Icon name="people" className="size-[14px]" /> Scene
                </button>
                <button className="ml-2 flex h-5 w-[74px] items-center gap-[3px]">
                  <Icon name="props" className="size-[14px]" /> Properties
                </button>
                <button className="ml-[7px] flex h-5 items-center gap-[2px]">
                  <Icon name="search" /> Search
                </button>
              </div>
            </aside>

            <section
              aria-label="3D view"
              className="relative mr-px ml-[4px] flex-1 overflow-hidden border border-[#8e9296] border-r-white border-b-white bg-linear-to-b from-[#4f75a5] to-[#ffffff]"
            >
              <Model />
            </section>
          </div>
        </div>
      </main>

      {/* Catalog browser */}
      <div className="flex h-6 items-end pl-[5px]">
        <button className="flex h-[21px] w-[109px] items-center gap-[3px] border border-b-0 border-[#9a9a86] bg-linear-to-b from-[#fbe7a6] to-[#fcdf86] pl-px text-[#6a6550] whitespace-nowrap">
          <Icon name="catalog" /> Catalog Browser
        </button>
      </div>

      {/* Status bar */}
      <footer className="flex h-[27px] items-center border-t border-b-[3px] border-t-[#7f9bc2] border-b-[#26282e] bg-linear-to-b from-[#d3e0ef] to-[#b9cbe2] pl-[3px] text-[#1e395b]">
        <a href="http://www.ironcad.com" className="text-[12px] text-[#0a62d8] underline">http://www.ironcad.com</a>
        <div className="ml-auto flex h-full items-center border-l border-[#a4b8d3] pl-[15px]">
          <span className="w-[138px] whitespace-nowrap">View size: 1437 x&nbsp; 755</span>
          <span className="w-[91px] whitespace-nowrap">Units: in, deg</span>
        </div>
        <div role="toolbar" aria-label="View" className="flex items-center">
          <button aria-label="Zoom page"><Icon name="magPage" /></button>
          <button aria-label="Zoom box" className="ml-[7px] flex items-center gap-[10px]"><Icon name="magBox" /><Caret /></button>
          <button aria-label="Camera" className="ml-1 flex items-center gap-[10px]"><Icon name="cubeYellow" /><Caret /></button>
          <button aria-label="Views" className="ml-[6px] flex items-center gap-2"><Icon name="cubeBlue" /><Caret /></button>
          <button aria-label="Look at" className="ml-[7px] flex items-center gap-2"><Icon name="eyeLock" /><Caret /></button>
          <button aria-label="Perspective" className="ml-1 flex h-5 w-6 items-center justify-center rounded-xs border border-[#c9a43c] bg-[#fbdf82]"><Icon name="persp" /></button>
          <button aria-label="Render glasses" className="ml-[3px] flex items-center gap-px"><Icon name="glasses" /><Caret /></button>
          <button aria-label="Shading" className="ml-[6px] flex h-5 w-8 items-center justify-center gap-1 rounded-xs border border-[#c9a43c] bg-[#fbdf82]"><Icon name="cubeShade" /><Caret /></button>
          <button aria-label="Parts" className="ml-[5px] flex items-center gap-[3px]"><Icon name="part" /><Caret /></button>
          <button aria-label="Select previous" className="ml-2"><Icon name="cursorBack" /></button>
          <button aria-label="Select" className="ml-1 flex h-5 w-6 items-center justify-center rounded-xs border border-[#c9a43c] bg-[#fbdf82]"><Icon name="cursor" /></button>
          <button aria-label="Pick" className="ml-1 mr-1"><Icon name="cursorGray" /></button>
          <Drop label="Drilldown" options={["Drilldown: Int"]} className="h-[21px] w-[87px] pl-px" />
          <Drop label="Style" options={["Default"]} className="ml-[3px] h-[21px] w-16 pl-px" />
          <button aria-label="Structure" className="mr-[6px] ml-[3px]"><Icon name="orgTree2" /></button>
        </div>
      </footer>
    </div>
  );
}
